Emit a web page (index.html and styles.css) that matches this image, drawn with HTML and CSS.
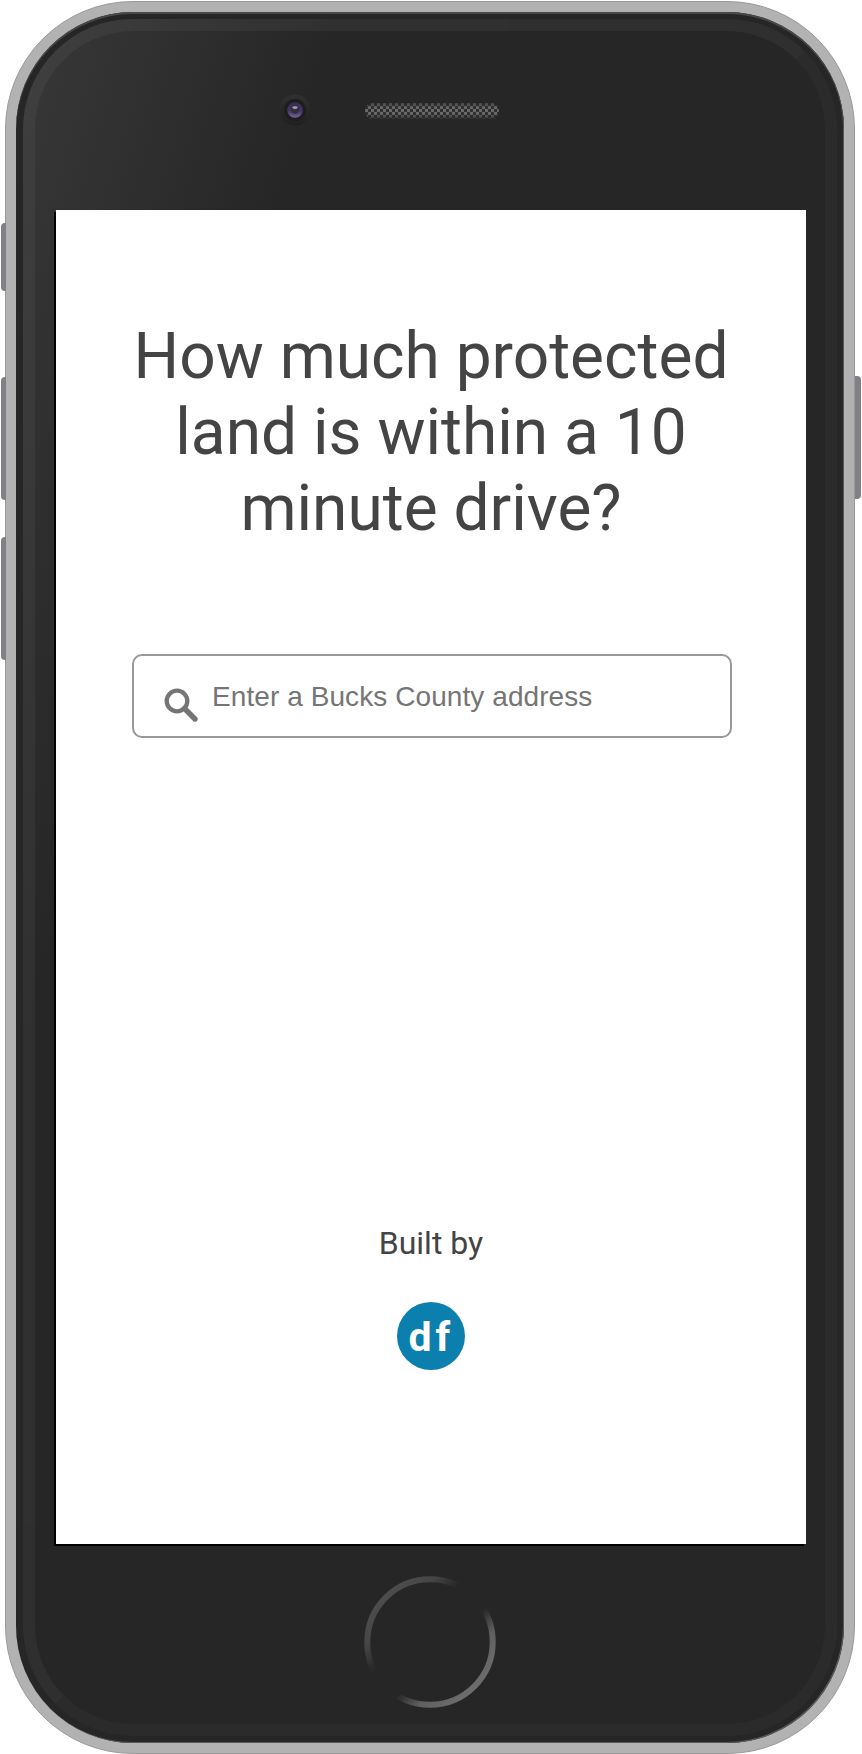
FILE: index.html
```html
<!DOCTYPE html>
<html lang="en">
<head>
<meta charset="utf-8">
<title>How much protected land is within a 10 minute drive?</title>
<link rel="stylesheet" href="styles.css">
</head>
<body>
<div class="phone">
  <span class="side-button mute"></span>
  <span class="side-button volume-up"></span>
  <span class="side-button volume-down"></span>
  <span class="side-button power"></span>
  <div class="bezel">
    <div class="glass">
      <header class="phone-top">
        <svg class="camera" viewBox="0 0 32 32">
          <defs>
            <linearGradient id="rim" x1="0" y1="0" x2="0" y2="1"><stop offset="0" stop-color="#303030"/><stop offset="1" stop-color="#202020"/></linearGradient>
            <linearGradient id="lens" x1="0" y1="0" x2="0" y2="1"><stop offset="0" stop-color="#3a2a55"/><stop offset=".55" stop-color="#443463"/><stop offset="1" stop-color="#75649a"/></linearGradient>
          </defs>
          <circle cx="16" cy="16" r="15.5" fill="url(#rim)"/>
          <circle cx="16" cy="16" r="11" fill="#1d1d1e"/>
          <circle cx="16" cy="16" r="7.8" fill="url(#lens)"/>
          <circle cx="16" cy="15.7" r="4" fill="#303038"/>
          <ellipse cx="16" cy="13.6" rx="2.7" ry="1.4" fill="#a5a0b4"/>
        </svg>
        <svg class="speaker" viewBox="0 0 134 16">
          <defs>
            <pattern id="mesh" width="6" height="6" patternUnits="userSpaceOnUse">
              <rect width="6" height="6" fill="#303030"/>
              <rect width="3" height="3" fill="#696969"/><rect x="3" y="3" width="3" height="3" fill="#696969"/>
            </pattern>
            <linearGradient id="shade" x1="0" y1="0" x2="0" y2="1"><stop offset="0" stop-color="#262626" stop-opacity=".55"/><stop offset=".3" stop-color="#262626" stop-opacity="0"/><stop offset=".65" stop-color="#262626" stop-opacity="0"/><stop offset="1" stop-color="#262626" stop-opacity=".8"/></linearGradient>
          </defs>
          <rect width="134" height="16" rx="8" fill="url(#mesh)"/>
          <rect width="134" height="16" rx="8" fill="url(#shade)"/>
        </svg>
      </header>
      <main class="screen">
        <h1 class="title">How much protected<br>land is within a 10<br>minute drive?</h1>
        <label class="search">
          <svg class="search-icon" viewBox="0 0 36 36">
            <circle cx="14" cy="14" r="10.3" fill="none" stroke="#757575" stroke-width="4.3"/>
            <path d="M21.5 21.5 L32 32" stroke="#757575" stroke-width="5.4" stroke-linecap="round"/>
          </svg>
          <input class="search-input" type="text" placeholder="Enter a Bucks County address">
        </label>
        <footer class="credit">
          <p class="credit-text">Built by</p>
          <span class="logo">df</span>
        </footer>
      </main>
      <svg class="home" viewBox="0 0 132 132">
        <defs>
          <linearGradient id="ring" gradientUnits="userSpaceOnUse" x1="19" y1="19" x2="113" y2="113">
            <stop offset="0" stop-color="#4d4d4d"/><stop offset=".18" stop-color="#464646"/><stop offset=".35" stop-color="#262626"/>
            <stop offset=".61" stop-color="#262626"/><stop offset=".78" stop-color="#606060"/><stop offset="1" stop-color="#6d6d6d"/>
          </linearGradient>
        </defs>
        <circle cx="66" cy="66" r="62.7" fill="none" stroke="url(#ring)" stroke-width="6"/>
      </svg>
    </div>
  </div>
</div>
</body>
</html>
```
FILE: styles.css
```css
* { box-sizing: border-box; }

body {
  margin: 0;
  background: #fff;
  font-family: Roboto, sans-serif;
  color: #444;
}

.phone {
  position: relative;
  width: 850px;
  height: 1753px;
  margin: 1px 0 0 5px;
  padding: 10px;
  border: 1px solid #999;
  border-radius: 128px;
  background: #b2b2b2;
}

.side-button {
  position: absolute;
  left: -5px;
  width: 5px;
  border-radius: 4px 0 0 4px;
  background: #808086;
}
.mute { top: 221px; height: 68px; }
.volume-up { top: 375px; height: 123px; }
.volume-down { top: 535px; height: 123px; }
.power { top: 374px; height: 123px; left: auto; right: -7px; width: 6px; border-radius: 0 4px 4px 0; }

.bezel {
  height: 100%;
  padding: 7px;
  border-radius: 117px;
  background: #262626;
  box-shadow: inset 0 2px 0 #484848, inset -1px -1px 0 #5a5a5a;
}

.glass {
  display: flex;
  flex-direction: column;
  height: 100%;
  padding: 0 19px;
  border: 12px solid;
  border-color: rgba(255, 255, 255, .045) rgba(255, 255, 255, .025) rgba(255, 255, 255, .025) rgba(255, 255, 255, .045);
  border-radius: 110px;
  background: linear-gradient(107deg, #383838 0, #262626 300px) border-box;
}

.phone-top {
  display: flex;
  align-items: flex-start;
  gap: 54px;
  height: 179px;
  padding: 63px 0 0 225px;
}
.camera { width: 32px; height: 32px; }
.speaker { width: 134px; height: 16px; margin-top: 9px; }

.screen {
  display: flex;
  flex-direction: column;
  align-items: center;
  flex: none;
  width: 750px;
  height: 1334px;
  margin-left: 2px;
  padding-top: 109px;
  background: #fff;
  box-shadow: -2px 2px 0 #000;
}

.title {
  margin: 0;
  font-size: 64px;
  font-weight: 400;
  line-height: 76px;
  text-align: center;
  white-space: nowrap;
}

.search {
  display: flex;
  width: 600px;
  height: 84px;
  margin: 107px 0 0 2px;
  padding-left: 29px;
  border: 2px solid #999;
  border-radius: 10px;
}
.search-icon { flex: none; width: 36px; height: 36px; margin-top: 31px; }
.search-input {
  flex: 1;
  height: 82px;
  padding: 0 0 0 13px;
  border: 0;
  outline: 0;
  background: none;
  font: 28px "Liberation Sans", Arial, sans-serif;
  letter-spacing: .08px;
}
.search-input::placeholder { color: #757575; }

.credit {
  display: flex;
  flex-direction: column;
  align-items: center;
  margin-top: 486px;
}
.credit-text { margin: 0; font-size: 32px; line-height: 38px; }
.logo {
  width: 68px;
  height: 68px;
  margin: 40px 0 0 1px;
  padding-left: 11px;
  border-radius: 50%;
  background: #0b7fad;
  color: #fff;
  font-size: 41px;
  font-weight: 700;
  line-height: 70px;
  letter-spacing: 4px;
}

.home { align-self: center; width: 132px; height: 132px; margin-top: 32px; }
```
